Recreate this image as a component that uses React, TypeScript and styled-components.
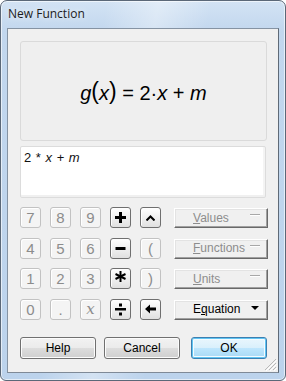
import React from 'react';
import styled, { createGlobalStyle, css } from 'styled-components';

const Global = createGlobalStyle`
  html, body { margin: 0; padding: 0; background: #ffffff; }
  body { width: 286px; height: 381px; overflow: hidden; }
  * { box-sizing: border-box; }
`;

const Window = styled.div`
  width: 286px;
  height: 381px;
  border: 1px solid #5b6878;
  border-radius: 7px 7px 6px 6px;
  background:
    linear-gradient(100deg, rgba(255,255,255,0) 30%, rgba(255,255,255,0.35) 45%, rgba(255,255,255,0) 60%),
    linear-gradient(180deg, #d3e3f4 0px, #c2d7ee 30px, #bcd3ec 100%);
  box-shadow: inset 0 0 0 1px rgba(255,255,255,0.6);
  display: flex;
  flex-direction: column;
  overflow: hidden;
`;

const TitleBar = styled.div`
  height: 27px;
  padding: 0 0 2px 7px;
  display: flex;
  align-items: center;
  font-family: "Open Sans", "Noto Sans", sans-serif;
  font-size: 12px;
  color: #1b1b1b;
  text-shadow: 0 0 6px rgba(255,255,255,0.9);
`;

const Client = styled.div`
  position: relative;
  margin: 0 0 0 6px;
  width: 272px;
  height: 345px;
  background: #f0f0f0;
  border: 1px solid #8593a3;
  border-right-color: #5f6a77;
  border-bottom-color: #7f8a97;
  padding: 12px 11px 0 12px;
  display: flex;
  flex-direction: column;
`;

const Preview = styled.div`
  width: 247px;
  height: 100px;
  border: 1px solid #dadada;
  border-radius: 3px;
  background: #efefef;
  display: flex;
  align-items: center;
  justify-content: center;
  padding-top: 2px;
  font-family: "Liberation Sans", Arial, sans-serif;
  font-size: 20px;
  color: #000;
`;

const I = styled.i`
  font-style: italic;
`;

const Paren = styled.span`
  font-size: 23px;
  font-weight: 300;
  position: relative;
  top: -1px;
`;

const Input = styled.div`
  margin-top: 5px;
  width: 246px;
  height: 52px;
  background: #ffffff;
  border: 1px solid #dcdcdc;
  border-radius: 2px;
  box-shadow: inset 0 -2px 0 #f0f0f0, inset -2px 0 0 #f4f4f4;
  padding: 3px 3px;
  font-family: "Liberation Sans", Arial, sans-serif;
  font-size: 13px;
  word-spacing: 1px;
  color: #111;
`;

const Keypad = styled.div`
  margin-top: 9px;
  display: flex;
`;

const KeyGrid = styled.div`
  display: grid;
  grid-template-columns: repeat(5, 21px);
  grid-auto-rows: 21px;
  column-gap: 9px;
  row-gap: 9.5px;
`;

const Key = styled.div<{ $on?: boolean }>`
  width: 21px;
  height: 21px;
  border-radius: 3px;
  display: flex;
  align-items: center;
  justify-content: center;
  font-family: "Liberation Sans", Arial, sans-serif;
  font-size: 15px;
  ${(p) =>
    p.$on
      ? css`
          border: 1px solid #6f6f6f;
          background: linear-gradient(#ffffff, #f0f0f0 50%, #e0e0e0);
          box-shadow: inset 1px 1px 0 #ffffff;
          color: #000;
          font-weight: bold;
        `
      : css`
          border: 1px solid #c2c2c2;
          background: #f4f4f4;
          box-shadow: inset 1px 1px 0 #ffffff;
          color: #8c8c8c;
        `}
`;

const ScriptX = styled.span`
  font-family: "DejaVu Serif", "Liberation Serif", serif;
  font-style: italic;
  font-size: 15px;
  color: #8c8c8c;
`;

const SideCol = styled.div`
  margin-left: 13px;
  display: grid;
  grid-auto-rows: 21px;
  row-gap: 9.5px;
`;

const ClassicBtn = styled.div<{ $on?: boolean }>`
  width: 94px;
  height: 20px;
  margin-top: 1px;
  background: #f0f0f0;
  border-top: 1px solid #ffffff;
  border-left: 1px solid #ffffff;
  border-right: 1px solid #696969;
  border-bottom: 1px solid #696969;
  box-shadow: inset -1px -1px 0 #a0a0a0, inset 1px 1px 0 #e3e3e3;
  display: flex;
  align-items: center;
  padding: 0 6px 1px 18px;
  font-family: "Liberation Sans", Arial, sans-serif;
  font-size: 12px;
  color: ${(p) => (p.$on ? '#000' : '#8d8d8d')};
`;

const BtnLabel = styled.span`
  flex: 1;
  text-align: left;
  u { text-decoration: underline; text-underline-offset: 1px; }
`;

const Dash = styled.span`
  width: 10px;
  height: 1px;
  background: #a8a8a8;
  box-shadow: 0 1px 0 #ffffff;
  margin-top: -6px;
  margin-right: 1px;
`;

const Tri = styled.span`
  width: 0;
  height: 0;
  border-left: 4px solid transparent;
  border-right: 4px solid transparent;
  border-top: 4px solid #000;
  margin-right: 2px;
  margin-top: -2px;
`;

const BottomRow = styled.div`
  margin-top: 17px;
  display: flex;
`;

const AeroBtn = styled.div<{ $default?: boolean; $gap: number }>`
  margin-left: ${(p) => p.$gap}px;
  width: 76px;
  height: 22px;
  border-radius: 3px;
  display: flex;
  align-items: center;
  justify-content: center;
  font-family: "Liberation Sans", Arial, sans-serif;
  font-size: 12px;
  color: #000;
  ${(p) =>
    p.$default
      ? css`
          border: 1px solid #3c7fb1;
          background: linear-gradient(#eaf6fd 0%, #d9f0fc 50%, #bee6fd 51%, #a7d9f5 100%);
          box-shadow: inset 0 0 0 1px #61c5f3, inset 0 0 0 2px #f4fbff;
        `
      : css`
          border: 1px solid #707070;
          background: linear-gradient(#f2f2f2 0%, #ebebeb 50%, #dddddd 51%, #cfcfcf 100%);
          box-shadow: inset 0 0 0 1px #fcfcfc;
        `}
`;

const Grip = styled.svg`
  position: absolute;
  right: 1px;
  bottom: 1px;
`;

function GripIcon() {
  return (
    <Grip width="13" height="13" viewBox="0 0 13 13">
      {[0, 4, 8].map((o) => (
        <g key={o}>
          <line x1={13 - 1} y1={o + 1} x2={o + 1} y2={12} stroke="#b9b9b9" strokeWidth="1" />
          <line x1={13} y1={o + 2} x2={o + 2} y2={13} stroke="#ffffff" strokeWidth="1" />
        </g>
      ))}
    </Grip>
  );
}

function Arrow() {
  return (
    <svg width="11" height="10" viewBox="0 0 11 10">
      <path d="M0 5 L5 0.5 L5 3.5 L11 3.5 L11 6.5 L5 6.5 L5 9.5 Z" fill="#000" />
    </svg>
  );
}

function Caret() {
  return (
    <svg width="9" height="6" viewBox="0 0 9 6">
      <path d="M0.5 5.5 L4.5 1.5 L8.5 5.5" stroke="#000" strokeWidth="2" fill="none" />
    </svg>
  );
}

function Plus() {
  return (
    <svg width="11" height="11" viewBox="0 0 11 11">
      <rect x="4" y="0" width="3" height="11" fill="#000" />
      <rect x="0" y="4" width="11" height="3" fill="#000" />
    </svg>
  );
}

function Minus() {
  return (
    <svg width="11" height="11" viewBox="0 0 11 11">
      <rect x="0.5" y="4" width="10" height="3" fill="#000" />
    </svg>
  );
}

function Times() {
  return (
    <svg width="11" height="11" viewBox="0 0 11 11" style={{ marginTop: -5 }}>
      <g stroke="#000" strokeWidth="2">
        <line x1="5.5" y1="0" x2="5.5" y2="11" />
        <line x1="0.5" y1="3" x2="10.5" y2="8" />
        <line x1="0.5" y1="8" x2="10.5" y2="3" />
      </g>
    </svg>
  );
}

function Divide() {
  return (
    <svg width="11" height="13" viewBox="0 0 11 13">
      <rect x="4" y="0.5" width="3" height="3" fill="#000" />
      <rect x="0" y="5" width="11" height="2.5" fill="#000" />
      <rect x="4" y="9.5" width="3" height="3" fill="#000" />
    </svg>
  );
}

export default function App() {
  return (
    <>
      <Global />
      <Window>
        <TitleBar>New Function</TitleBar>
        <Client>
          <Preview>
            <span>
              <I>g</I>
              <Paren>(</Paren>
              <I>x</I>
              <Paren>)</Paren> = 2·<I>x</I> + <I>m</I>
            </span>
          </Preview>
          <Input>
            2 * <I>x</I> + <I>m</I>
          </Input>
          <Keypad>
            <KeyGrid>
              <Key>7</Key>
              <Key>8</Key>
              <Key>9</Key>
              <Key $on><Plus /></Key>
              <Key $on><Caret /></Key>
              <Key>4</Key>
              <Key>5</Key>
              <Key>6</Key>
              <Key $on><Minus /></Key>
              <Key>(</Key>
              <Key>1</Key>
              <Key>2</Key>
              <Key>3</Key>
              <Key $on><Times /></Key>
              <Key>)</Key>
              <Key>0</Key>
              <Key>.</Key>
              <Key><ScriptX>x</ScriptX></Key>
              <Key $on><Divide /></Key>
              <Key $on><Arrow /></Key>
            </KeyGrid>
            <SideCol>
              <ClassicBtn>
                <BtnLabel><u>V</u>alues</BtnLabel>
                <Dash />
              </ClassicBtn>
              <ClassicBtn>
                <BtnLabel><u>F</u>unctions</BtnLabel>
                <Dash />
              </ClassicBtn>
              <ClassicBtn>
                <BtnLabel><u>U</u>nits</BtnLabel>
                <Dash />
              </ClassicBtn>
              <ClassicBtn $on>
                <BtnLabel>E<u>q</u>uation</BtnLabel>
                <Tri />
              </ClassicBtn>
            </SideCol>
          </Keypad>
          <BottomRow>
            <AeroBtn $gap={0}>Help</AeroBtn>
            <AeroBtn $gap={8}>Cancel</AeroBtn>
            <AeroBtn $gap={11} $default>OK</AeroBtn>
          </BottomRow>
          <GripIcon />
        </Client>
      </Window>
    </>
  );
}
